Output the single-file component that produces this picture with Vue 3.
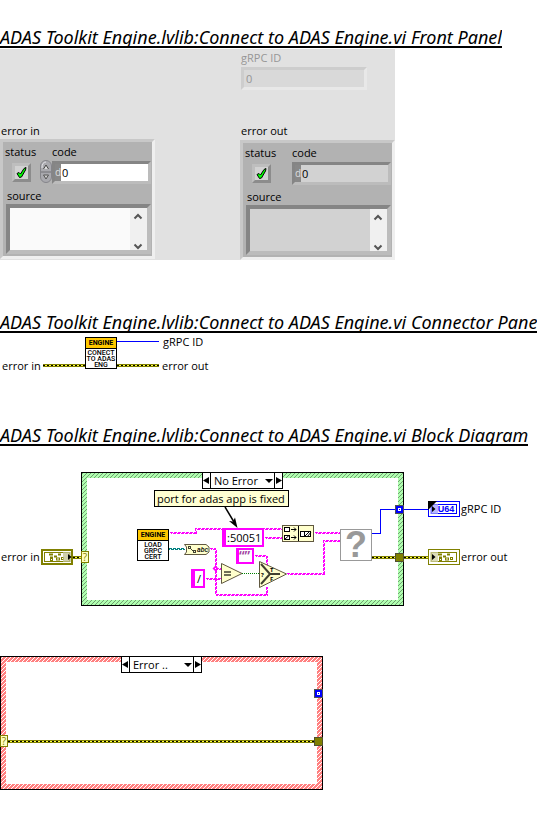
<script setup>
import { ref } from 'vue'

const clusters = ref([
  { id: 'in', title: 'error in', editable: true, status: true, code: '0', source: '' },
  { id: 'out', title: 'error out', editable: false, status: true, code: '0', source: '' }
])
const grpcId = ref('0')
const noErrorCase = ref('No Error')
const errorCase = ref('Error ..')

/* string wires, drawn as a two-row wave */
const stringWires = [
  'M169 532H195V528H282',
  'M264 537H282',
  'M209 548H215V594H266V585',
  'M215 568H222',
  'M205 578H222',
  'M254 555H266V564',
  'M286 573H323V540H340',
  'M314 532H340'
]
</script>

<template>
  <main class="page">
    <h2 class="title">ADAS Toolkit Engine.lvlib:Connect to ADAS Engine.vi Front Panel</h2>
    <section class="panel">
      <div class="grpc">
        <label for="grpc">gRPC ID</label>
        <input id="grpc" v-model="grpcId" class="grpc-field" disabled />
      </div>
      <div v-for="c in clusters" :key="c.id" class="group" :class="c.id">
        <h3 class="group-title">{{ c.title }}</h3>
        <div class="cluster">
          <div class="labels">
            <label :for="'status-' + c.id">status</label>
            <label :for="'code-' + c.id">code</label>
          </div>
          <div class="controls">
            <span class="led">
              <input :id="'status-' + c.id" v-model="c.status" type="checkbox" :disabled="!c.editable" />
              <svg v-if="c.status" class="tick" width="13" height="13" viewBox="0 0 13 13" aria-hidden="true">
                <path d="M2 7.500L4 6.500L5.500 8L9 2.500L11 1.500L10.500 4L6.500 11L4.500 11.500Z" fill="#0f0" stroke="#000" stroke-width="1" />
              </svg>
            </span>
            <svg v-if="c.editable" class="spinner" width="12" height="24" viewBox="0 0 12 24" aria-hidden="true">
              <rect x=".5" y=".5" width="11" height="22" rx="5.500" fill="#a9a9ae" stroke="#85858a" />
              <path d="M2 8Q2 2 6 2" fill="none" stroke="#e4e4e8" />
              <path d="M1 12H11" stroke="#707074" />
              <path d="M3.500 9L6 5L8.500 9" fill="#ddd" stroke="#444" />
              <path d="M3.500 15L6 19L8.500 15Z" fill="#ccc" stroke="#555" />
            </svg>
            <span class="code-box">
              <span class="radix">d</span>
              <input :id="'code-' + c.id" v-model="c.code" :readonly="!c.editable" />
            </span>
          </div>
          <label class="source-label" :for="'source-' + c.id">source</label>
          <div class="source-box">
            <textarea :id="'source-' + c.id" v-model="c.source" :readonly="!c.editable"></textarea>
            <svg class="scroll" width="17" height="42" viewBox="0 0 17 42" aria-hidden="true">
              <path d="M4.500 10.500L8 7L11.500 10.500M4.500 36.500L8 40L11.500 36.500" fill="none" stroke="#555" stroke-width="2" />
            </svg>
          </div>
        </div>
      </div>
    </section>

    <h2 class="title">ADAS Toolkit Engine.lvlib:Connect to ADAS Engine.vi Connector Pane</h2>
    <svg class="canvas connector" viewBox="0 333 558 40" preserveAspectRatio="xMinYMin meet">
      <path d="M117 341.500H159" stroke="#0000ff" />
      <g fill="none" shape-rendering="crispEdges">
        <path d="M43 365.500H85M117 365.500H159" stroke="#808000" stroke-width="3" />
        <path d="M43 365.500H85M117 365.500H159" stroke="#ffff40" />
        <path d="M43 365.500H85M117 365.500H159" stroke="#000" stroke-dasharray="2 2" />
      </g>
      <g class="vi">
        <rect x="85.500" y="337.500" width="31" height="31" fill="#fff" stroke="#000" />
        <rect x="86" y="338" width="30" height="10" fill="#ffc800" />
        <path d="M86 348.500H116" stroke="#000" />
        <text class="vi-name" x="101" y="345">ENGINE</text>
        <text x="101" y="355">CONECT<tspan x="101" dy="6">TO ADAS</tspan><tspan x="101" dy="6">ENG</tspan></text>
      </g>
      <text x="2" y="370">error in</text>
      <text x="163" y="346">gRPC ID</text>
      <text x="162" y="370">error out</text>
    </svg>

    <h2 class="title">ADAS Toolkit Engine.lvlib:Connect to ADAS Engine.vi Block Diagram</h2>
    <section class="stage first">
      <svg class="canvas" viewBox="0 472 558 134" preserveAspectRatio="xMinYMin meet">
        <defs>
          <pattern id="hatch-green" width="4" height="4" patternUnits="userSpaceOnUse">
            <rect width="4" height="4" fill="#b0ffb0" />
            <path d="M0 3h1v1h-1zM1 2h1v1h-1zM2 1h1v1h-1zM3 0h1v1h-1z" fill="#70a070" />
          </pattern>
          <g id="cluster-glyph" fill="none" stroke="#808000">
            <path d="M8 5.500H12M9 8.500H12M17 5.500H20M13 7.500H16" stroke-width="2" />
            <rect x="9.500" y="9.500" width="2" height="2" />
            <rect x="15.500" y="9" width="3" height="2" />
            <rect x="20.500" y="8.500" width="2" height="2" />
          </g>
        </defs>

        <rect x="81.500" y="472.500" width="322" height="133" fill="url(#hatch-green)" stroke="#000" />
        <rect x="87" y="478" width="311" height="122" fill="#fff" />

        <!-- wires -->
        <g fill="none" shape-rendering="crispEdges">
          <g v-for="w in stringWires" :key="w" stroke="#ff00ff">
            <path :d="w" transform="translate(.5 .5)" stroke-dasharray="3 1" />
            <path :d="w" transform="translate(1.500 1.500)" stroke-dasharray="3 1" stroke-dashoffset="2" />
          </g>
          <path d="M169 548.500H185" stroke="#008080" stroke-dasharray="3 1" />
          <path d="M169 549.500H185" stroke="#008080" stroke-dasharray="3 1" stroke-dashoffset="2" />
          <path d="M242 573.500H260" stroke="#008000" stroke-dasharray="1 1" />
          <path d="M372 533.500H380.500V509.500H428" stroke="#0000ff" />
          <path d="M73 557.500H82M372 557.500H428" stroke="#808000" stroke-width="3" />
          <path d="M73 557.500H82M372 557.500H428" stroke="#ffff40" />
          <path d="M73 557.500H82M372 557.500H428" stroke="#000" stroke-dasharray="2 2" />
        </g>
        <path d="M215.500 565.500L218.500 568.500L215.500 571.500L212.500 568.500Z" fill="#ff00ff" />
        <rect x="215" y="568" width="1" height="1" fill="#fff" />

        <!-- tunnels -->
        <rect x="81.500" y="551.500" width="7" height="11" fill="#ffffc0" stroke="#808000" />
        <text class="mark" x="85" y="561">?</text>
        <rect x="395.500" y="505.500" width="8" height="8" fill="#0000ff" stroke="#505050" />
        <rect x="398" y="508" width="3" height="3" fill="#fff" />
        <rect x="399" y="509" width="1" height="1" fill="#00f" />
        <rect x="395.500" y="553.500" width="8" height="8" fill="#808000" stroke="#505030" />

        <!-- error in terminal -->
        <text x="1" y="561">error in</text>
        <rect x="42" y="550" width="30" height="14" fill="#fff" stroke="#808000" stroke-width="2" />
        <rect x="44.500" y="552.500" width="25" height="9" fill="none" stroke="#808000" />
        <use href="#cluster-glyph" x="41" y="549" />
        <rect x="63" y="552" width="8" height="10" fill="#c0c090" fill-opacity=".75" />
        <path d="M68 554L71.500 557L68 560Z" />

        <!-- sub VI -->
        <g class="vi">
          <rect x="137.500" y="529.500" width="31" height="31" fill="#fff" stroke="#000" />
          <rect x="138" y="530" width="30" height="10" fill="#ffc800" />
          <path d="M138 540.500H168" stroke="#000" />
          <text class="vi-name" x="153" y="537">ENGINE</text>
          <text x="153" y="547">LOAD<tspan x="153" dy="6">GRPC</tspan><tspan x="153" dy="6">CERT</tspan></text>
        </g>

        <!-- path to string -->
        <path d="M184.500 544.500H206L209 547V552L206 554.500H184.500L186.500 552V547Z" fill="#ffffcc" stroke="#605840" />
        <g fill="none" stroke="#404030">
          <rect x="188.500" y="546.500" width="2" height="2" />
          <rect x="193.500" y="550.500" width="2" height="2" />
          <path d="M191 549L193 551" />
        </g>
        <text class="abc" x="197" y="552">abc</text>

        <!-- comment and pointer -->
        <rect x="154.500" y="490.500" width="134" height="16" fill="#ffffd2" stroke="#000" />
        <text x="157" y="503">port for adas app is fixed</text>
        <path d="M225 507L234 522" stroke="#000" stroke-width="1.500" />
        <path d="M237.500 528L229 521L233 521.500L235 517.500Z" />

        <!-- string constants -->
        <rect x="222" y="528" width="42" height="19" fill="#f0f" />
        <rect x="226" y="530" width="36" height="15" fill="#fff" />
        <text x="227" y="542">:50051</text>
        <rect x="191" y="569" width="14" height="19" fill="#f0f" />
        <rect x="195" y="571" width="8" height="15" fill="#fff" />
        <text x="197" y="583">/</text>
        <rect x="236" y="548" width="18" height="16" fill="#f0f" />
        <rect x="239" y="550" width="13" height="12" fill="#fff" />
        <text class="quotes" x="239" y="561">“”</text>

        <!-- equality -->
        <path d="M221.500 563.500L242 573.500L221.500 583.500Z" fill="#ffffcc" stroke="#605840" />
        <path d="M224 572H231M224 575H231" stroke="#404030" stroke-width="1.500" />

        <!-- select -->
        <path d="M259.500 561.500L286.500 574L259.500 587.500Z" fill="#ffffcc" stroke="#605840" />
        <path d="M261 564L270 574L261 584M270 574H280" fill="none" stroke="#404030" stroke-width="2" />
        <text class="tiny" x="261" y="577">?</text>
        <text class="tiny" x="270" y="572">T</text>
        <text class="tiny" x="270" y="581">F</text>

        <!-- concatenate strings -->
        <rect x="282.500" y="525.500" width="31" height="16" fill="#ffffcc" stroke="#605840" />
        <g fill="none" stroke="#000">
          <path d="M298.500 526V541" />
          <rect x="284.500" y="527.500" width="5" height="4" fill="#fff" />
          <rect x="284.500" y="535.500" width="5" height="4" fill="#fff" />
          <path d="M285 539L289 535.500" />
          <path d="M291 529.500H296M294 527.500L296 529.500L294 531.500M291 537.500H296M294 535.500L296 537.500L294 539.500" />
          <rect x="300.500" y="531.500" width="10" height="5" fill="#fff" />
          <path d="M304.500 532V536M305 536L309 532M307.500 536.500L311 532" />
        </g>

        <!-- missing sub VI -->
        <rect x="340.500" y="529.500" width="31" height="31" fill="#fff" stroke="#999" />
        <text class="missing" x="356" y="557">?</text>

        <!-- gRPC ID terminal -->
        <rect x="428.500" y="501.500" width="31" height="15" fill="#fff" stroke="#00f" />
        <rect x="431.500" y="504.500" width="25" height="9" fill="none" stroke="#00f" />
        <rect x="430" y="504" width="8" height="10" fill="#a0a0ff" fill-opacity=".75" />
        <text class="type" x="446" y="512">U64</text>
        <path d="M428 501H437L428 510ZM432 506L435.500 509L432 512Z" />
        <text x="461" y="513">gRPC ID</text>

        <!-- error out terminal -->
        <rect x="428.500" y="549.500" width="31" height="15" fill="#fff" stroke="#808000" />
        <rect x="431.500" y="552.500" width="25" height="9" fill="none" stroke="#808000" />
        <use href="#cluster-glyph" x="430" y="549" />
        <rect x="430" y="552" width="8" height="10" fill="#d0d0a0" fill-opacity=".75" />
        <path d="M432 554L435.500 557L432 560Z" />
        <text x="461" y="561">error out</text>
      </svg>
      <div class="selector">
        <button type="button" aria-label="Previous case"><svg width="7" height="7" viewBox="0 0 7 7"><path d="M6 0V7L0 3.500Z" /></svg></button>
        <select v-model="noErrorCase" aria-label="Case">
          <option>No Error</option>
          <option>Error ..</option>
        </select>
        <svg class="drop" width="8" height="4" viewBox="0 0 8 4" aria-hidden="true"><path d="M0 0H8L4 4Z" /></svg>
        <button type="button" aria-label="Next case"><svg width="7" height="7" viewBox="0 0 7 7"><path d="M1 0V7L7 3.500Z" /></svg></button>
      </div>
    </section>

    <section class="stage second">
      <svg class="canvas" viewBox="0 656 558 134" preserveAspectRatio="xMinYMin meet">
        <defs>
          <pattern id="hatch-red" width="4" height="4" patternUnits="userSpaceOnUse">
            <rect width="4" height="4" fill="#ff8080" />
            <path d="M0 3h1v1h-1zM1 2h1v1h-1zM2 1h1v1h-1zM3 0h1v1h-1z" fill="#fff" />
          </pattern>
        </defs>
        <rect x=".5" y="656.500" width="322" height="133" fill="url(#hatch-red)" stroke="#000" />
        <rect x="6" y="662" width="311" height="122" fill="#fff" />
        <g fill="none" shape-rendering="crispEdges">
          <path d="M8 741.500H315" stroke="#808000" stroke-width="3" />
          <path d="M8 741.500H315" stroke="#ffff40" />
          <path d="M8 741.500H315" stroke="#000" stroke-dasharray="2 2" />
        </g>
        <rect x=".5" y="735.500" width="7" height="11" fill="#ffffc0" stroke="#808000" />
        <text class="mark" x="4" y="745">?</text>
        <rect x="314.500" y="689.500" width="8" height="8" fill="#0000ff" stroke="#505050" />
        <rect x="317" y="692" width="3" height="3" fill="#fff" />
        <rect x="318" y="693" width="1" height="1" fill="#00f" />
        <rect x="314.500" y="737.500" width="8" height="8" fill="#808000" stroke="#505030" />
      </svg>
      <div class="selector">
        <button type="button" aria-label="Previous case"><svg width="7" height="7" viewBox="0 0 7 7"><path d="M6 0V7L0 3.500Z" /></svg></button>
        <select v-model="errorCase" aria-label="Case">
          <option>Error ..</option>
          <option>No Error</option>
        </select>
        <svg class="drop" width="8" height="4" viewBox="0 0 8 4" aria-hidden="true"><path d="M0 0H8L4 4Z" /></svg>
        <button type="button" aria-label="Next case"><svg width="7" height="7" viewBox="0 0 7 7"><path d="M1 0V7L7 3.500Z" /></svg></button>
      </div>
    </section>
  </main>
</template>

<style>
body {
  background: #fff;
}
</style>

<style scoped>
.page {
  display: flex;
  flex-direction: column;
  align-items: flex-start;
  overflow: hidden;
  padding: 24px 0 48px;
  font-family: "Open Sans", "Noto Sans", sans-serif;
  font-size: 11px;
  color: #000;
}
.page * {
  box-sizing: border-box;
}
input,
textarea,
select,
button {
  margin: 0;
  padding: 0;
  border: 0;
  border-radius: 0;
  background: none;
  font: inherit;
  color: inherit;
  outline: none;
}
.title {
  height: 24px;
  margin: 0;
  overflow: hidden;
  border-bottom: 2px solid #000;
  font-family: "Noto Sans", sans-serif;
  font-size: 18px;
  font-style: italic;
  font-weight: 400;
  line-height: 26px;
  white-space: nowrap;
}
.title:not(:first-child) {
  margin-top: 49px;
}

/* front panel */
.panel {
  display: grid;
  grid-template-columns: 240px 155px;
  margin-top: 1px;
  background: #e1e1e1;
}
.grpc {
  grid-column: 2;
  display: flex;
  flex-direction: column;
  height: 73px;
  padding-left: 1px;
  line-height: 18px;
  color: #969696;
}
.grpc-field {
  width: 126px;
  height: 23px;
  padding-left: 2px;
  border: 3px solid;
  border-color: #cdcdcd #e8e8e8 #e8e8e8 #cdcdcd;
  background: #d9d9d9;
}
.group {
  grid-row: 2;
}
.group-title {
  margin: 0;
  padding-left: 1px;
  font-size: 11px;
  font-weight: 400;
  line-height: 17px;
}
.out .group-title {
  line-height: 18px;
}
.cluster {
  width: 155px;
  height: 120px;
  padding: 2px 1px 0 2px;
  border: 3px solid;
  border-color: #c8c8c8 #efefef #efefef #c8c8c8;
  background: #b2b2b2;
}
.labels {
  display: grid;
  grid-template-columns: 47px 1fr;
  line-height: 16px;
}
.controls {
  display: flex;
  align-items: center;
  height: 24px;
  padding-left: 7px;
}
.led {
  position: relative;
  width: 19px;
  height: 19px;
  margin-right: 9px;
}
.led input {
  display: block;
  appearance: none;
  width: 19px;
  height: 19px;
  border: 3px solid;
  border-color: #bebebe #8c8c8c #8c8c8c #bebebe;
  background: #d2d2d2;
}
.tick {
  position: absolute;
  left: 3px;
  top: 3px;
  pointer-events: none;
}
.code-box {
  display: flex;
  width: 99px;
  height: 23px;
  margin-left: auto;
  border: 3px solid;
  border-color: #858585 #bcbcbc #bcbcbc #858585;
}
.radix {
  width: 6px;
  background: #888;
  color: #ddd;
  font-size: 10px;
  line-height: 17px;
}
.code-box input {
  flex: 1;
  min-width: 0;
  padding-left: 1px;
  background: #fff;
}
.source-label {
  display: block;
  margin-top: 4px;
  padding-left: 2px;
  line-height: 16px;
}
.source-box {
  display: flex;
  height: 50px;
  margin-left: 1px;
  border: 4px solid;
  border-color: #858585 #bcbcbc #bcbcbc #858585;
  background: #fafafa;
}
.source-box textarea {
  flex: 1;
  min-width: 0;
  resize: none;
  overflow: hidden;
}
.scroll {
  flex: none;
  background: #f0f0f0;
}
.out .code-box input,
.out .source-box textarea {
  background: #d2d2d2;
}

/* diagrams */
.canvas {
  display: block;
  width: 100%;
  overflow: visible;
}
.connector {
  height: 40px;
}
.stage {
  position: relative;
  width: 100%;
}
.stage .canvas {
  height: 134px;
}
.first {
  margin-top: 26px;
}
.second {
  margin-top: 50px;
}
.vi text {
  font-family: Roboto, sans-serif;
  font-size: 7px;
  font-weight: 500;
  text-anchor: middle;
}
.vi .vi-name {
  font-weight: 700;
}
.mark {
  font-size: 10px;
  fill: #808000;
  text-anchor: middle;
}
.abc {
  font-family: Roboto, sans-serif;
  font-size: 7px;
  font-style: italic;
  font-weight: 500;
}
.tiny {
  font-size: 6px;
  font-weight: 700;
}
.quotes {
  font-size: 14px;
  font-weight: 600;
  fill: #a040a0;
}
.missing {
  font-family: "Liberation Sans", sans-serif;
  font-size: 36px;
  font-weight: 700;
  fill: #999;
  text-anchor: middle;
}
.type {
  font-family: "Liberation Sans", sans-serif;
  font-size: 9px;
  font-weight: 700;
  fill: #00f;
  text-anchor: middle;
}
.selector {
  position: absolute;
  top: 0;
  left: 121px;
  display: flex;
  align-items: center;
  width: 81px;
  height: 17px;
  border: 1px solid #000;
  background: #fff;
}
.first .selector {
  left: 202px;
}
.selector button {
  display: flex;
  flex: none;
  align-items: center;
  width: 7px;
  height: 15px;
}
.selector select {
  flex: 1;
  min-width: 0;
  height: 15px;
  padding-left: 3px;
  appearance: none;
  border-left: 1px solid #000;
  line-height: 15px;
}
.drop {
  flex: none;
  margin-right: 1px;
}
.drop + button {
  width: 8px;
  border-left: 1px solid #000;
}
</style>
